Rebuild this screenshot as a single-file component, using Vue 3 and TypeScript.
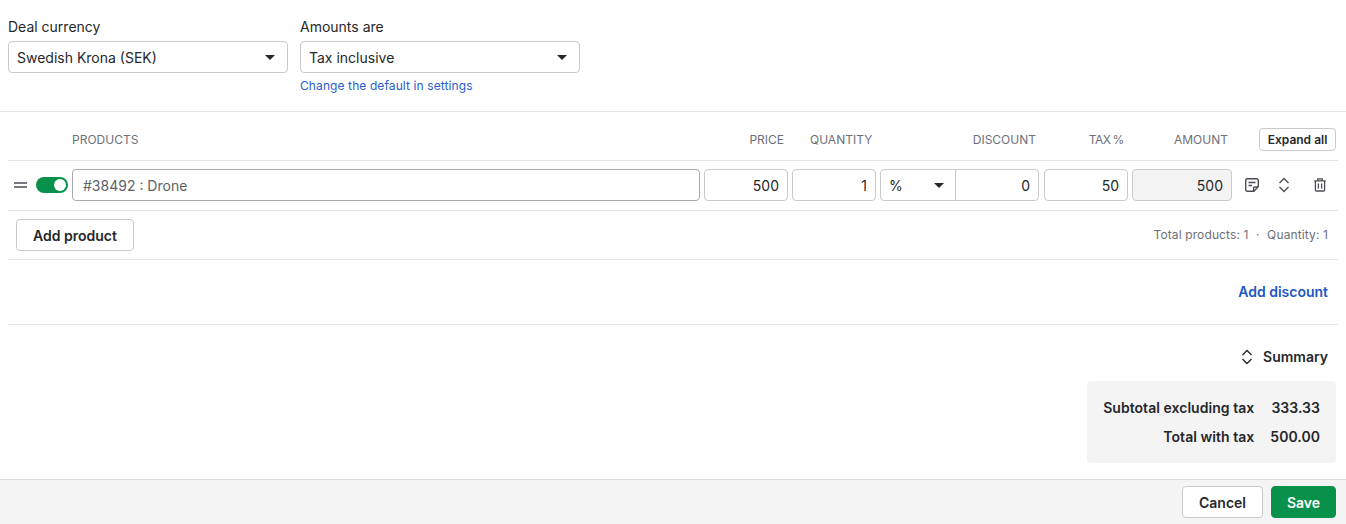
<script setup lang="ts">
const fields = [
  { label: 'Deal currency', value: 'Swedish Krona (SEK)', hint: '' },
  { label: 'Amounts are', value: 'Tax inclusive', hint: 'Change the default in settings' },
]
</script>

<template>
  <div class="page">
    <section class="top">
      <div v-for="f in fields" :key="f.label" class="field">
        <label class="label">{{ f.label }}</label>
        <div class="box select">
          <span>{{ f.value }}</span>
          <i class="caret"></i>
        </div>
        <a v-if="f.hint" class="hint">{{ f.hint }}</a>
      </div>
    </section>

    <section class="table">
      <div class="grid head">
        <span class="c-prod">PRODUCTS</span>
        <span class="r c-price">PRICE</span>
        <span class="c-qty">QUANTITY</span>
        <span class="r c-disc">DISCOUNT</span>
        <span class="r c-tax">TAX %</span>
        <span class="r c-amt">AMOUNT</span>
        <button class="expand">Expand all</button>
      </div>

      <div class="grid row">
        <div class="c-lead">
          <span class="drag"></span>
          <span class="toggle"><span class="knob"></span></span>
        </div>
        <div class="box prod c-prod">#38492 : Drone</div>
        <div class="box num c-price">500</div>
        <div class="box num c-qty">1</div>
        <div class="box disc c-disc">
          <div class="unit"><span>%</span><i class="caret"></i></div>
          <div class="dval">0</div>
        </div>
        <div class="box num c-tax">50</div>
        <div class="box num ro c-amt">500</div>
        <div class="actions">
          <svg width="16" height="16" viewBox="0 0 16 16" fill="none" stroke="#4b4d55" stroke-width="1.4">
            <path d="M1.7 3.2a1.5 1.5 0 0 1 1.5-1.5h9.6a1.5 1.5 0 0 1 1.5 1.5v6.6l-4.5 4.5H3.2a1.5 1.5 0 0 1-1.5-1.5z" />
            <path d="M4.5 5.5h7M4.5 8.5h3.5M9.6 14V10.8a.8.8 0 0 1 .8-.8H14" />
          </svg>
          <svg width="16" height="16" viewBox="0 0 16 16" fill="none" stroke="#4b4d55" stroke-width="1.3">
            <path d="M3.5 6 8 1.5 12.5 6M3.5 10 8 14.5 12.5 10" />
          </svg>
          <svg width="16" height="16" viewBox="0 0 16 16" fill="none" stroke="#4b4d55" stroke-width="1.3">
            <path d="M2.2 3.8h11.6M5.8 3.6V1.9h4.4v1.7M3.4 3.8v9A1.2 1.2 0 0 0 4.6 14h6.8a1.2 1.2 0 0 0 1.2-1.2v-9M6.4 6.4v5M9.6 6.4v5" />
          </svg>
        </div>
      </div>

      <div class="add-row">
        <button class="btn">Add product</button>
        <span class="totals">Total products: 1 <span class="dot">·</span> Quantity: 1</span>
      </div>

      <div class="discount-row">
        <a class="add-discount">Add discount</a>
      </div>
    </section>

    <section class="summary">
      <div class="summary-title">
        <svg width="16" height="16" viewBox="0 0 16 16" fill="none" stroke="#26272b" stroke-width="1.4">
          <path d="M3.5 6 8 1.5 12.5 6M3.5 10 8 14.5 12.5 10" />
        </svg>
        <span>Summary</span>
      </div>
      <div class="summary-box">
        <span>Subtotal excluding tax</span><span>333.33</span>
        <span>Total with tax</span><span>500.00</span>
      </div>
    </section>

    <footer class="footer">
      <button class="btn cancel">Cancel</button>
      <button class="btn save">Save</button>
    </footer>
  </div>
</template>

<style>
html, body { margin: 0; background: #fff; }
</style>

<style scoped>
.page {
  width: 1346px;
  height: 524px;
  display: flex;
  flex-direction: column;
  overflow: hidden;
  font-family: Inter, "Liberation Sans", sans-serif;
  color: #26272b;
  box-sizing: border-box;
}
.top {
  box-sizing: border-box;
  padding: 16px 8px 0;
  display: flex;
  gap: 12px;
  border-bottom: 1px solid #e4e4e6;
  flex: none;
  height: 112px;
}
.field { width: 280px; display: flex; flex-direction: column; }
.label {
  font: 14px/22px Inter, sans-serif;
  height: 25px;
}
.box {
  box-sizing: border-box;
  height: 32px;
  border: 1px solid #c9cacd;
  border-radius: 4px;
  background: #fff;
  font: 14px/30px Inter, sans-serif;
  padding-top: 1px;
}
.select {
  display: flex;
  align-items: center;
  justify-content: space-between;
  padding: 1px 12px 0 8px;
}
.caret {
  width: 0;
  height: 0;
  border-left: 5px solid transparent;
  border-right: 5px solid transparent;
  border-top: 5px solid #26272b;
}
.hint {
  margin-top: 5px;
  font: 12px/16px Inter, sans-serif;
  letter-spacing: 0.1px;
  color: #2a5dd0;
}
.table { padding: 0 8px; flex: none; }
.grid {
  display: grid;
  grid-template-columns: 64px 632px 88px 88px 164px 88px 100px 104px;
  border-bottom: 1px solid #e4e4e6;
  align-items: center;
}
.head {
  height: 49px;
  box-sizing: border-box;
  padding-top: 6px;
  font-size: 12px;
  color: #6e7077;
}
.r { text-align: right; }
.head .c-prod { grid-column: 2; }
.head .c-price { grid-column: 3; padding-right: 8px; }
.head .c-qty { grid-column: 4; padding-left: 18px; }
.head .c-disc { grid-column: 5; padding-right: 8px; }
.head .c-tax { grid-column: 6; padding-right: 8px; letter-spacing: -0.4px; word-spacing: -1px; }
.head .c-amt { grid-column: 7; padding-right: 4px; }
.expand {
  grid-column: 8;
  justify-self: end;
  width: 77px;
  height: 23px;
  padding: 0;
  border: 1px solid #c9cacd;
  border-radius: 4px;
  background: #fff;
  font: 600 12px Inter, sans-serif;
  color: #26272b;
}
.row {
  height: 50px;
  box-sizing: border-box;
  padding-bottom: 1px;
}
.row .c-prod, .row .c-price, .row .c-qty, .row .c-tax { margin-right: 4px; }
.row .c-disc { margin-right: 5px; }
.c-lead { display: flex; align-items: center; padding-left: 6px; gap: 9px; }
.drag {
  width: 13px;
  height: 6px;
  box-sizing: border-box;
  border-top: 2px solid #777980;
  border-bottom: 2px solid #777980;
}
.toggle {
  width: 32px;
  height: 16px;
  border-radius: 8px;
  background: #08914a;
  position: relative;
}
.knob {
  position: absolute;
  right: 2px;
  top: 2px;
  width: 12px;
  height: 12px;
  border-radius: 50%;
  background: #fff;
}
.prod { padding-left: 10px; color: #5f6168; border-color: #a8aaae; }
.num { text-align: right; padding-right: 8px; }
.disc { display: flex; padding-top: 0; }
.unit {
  width: 75px;
  box-sizing: border-box;
  display: flex;
  align-items: center;
  justify-content: space-between;
  padding: 1px 11px 0 8px;
  border-right: 1px solid #c9cacd;
}
.dval { flex: 1; text-align: right; padding: 1px 8px 0 0; }
.ro { background: #f3f3f4; }
.actions { display: flex; gap: 16px; padding-left: 12px; }
.actions svg:last-child { margin-left: 4px; }
.add-row {
  height: 49px;
  box-sizing: border-box;
  border-bottom: 1px solid #e4e4e6;
  display: flex;
  align-items: center;
  justify-content: space-between;
  padding: 0 10px 0 8px;
}
.btn {
  box-sizing: border-box;
  height: 32px;
  border: 1px solid #c9cacd;
  border-radius: 4px;
  background: #fff;
  font: 600 14px Inter, sans-serif;
  color: #26272b;
  padding: 0 16px;
}
.totals { font-size: 12px; letter-spacing: 0.12px; color: #6e7077; margin-top: -2px; }
.dot { margin: 0 4px; }
.discount-row {
  height: 65px;
  box-sizing: border-box;
  border-bottom: 1px solid #e4e4e6;
  display: flex;
  align-items: center;
  justify-content: flex-end;
  padding: 0 10px 2px 0;
}
.add-discount { font-size: 14px; font-weight: 600; color: #1d56c4; }
.summary {
  flex: 1;
  padding: 0 10px 0 0;
  display: flex;
  flex-direction: column;
  align-items: flex-end;
}
.summary-title {
  height: 56px;
  box-sizing: border-box;
  padding-top: 7px;
  display: flex;
  align-items: center;
  gap: 8px;
  font-size: 14px;
  font-weight: 600;
  padding-right: 8px;
}
.summary-box {
  width: 249px;
  height: 82px;
  box-sizing: border-box;
  padding: 12px 16px;
  background: #f4f4f5;
  border-radius: 4px;
  display: grid;
  grid-template-columns: 1fr auto;
  column-gap: 16px;
  align-items: center;
  justify-items: end;
  font-size: 14px;
  font-weight: 600;
  letter-spacing: 0.04px;
}
.footer {
  flex: none;
  height: 45px;
  box-sizing: border-box;
  border-top: 1px solid #dcdcde;
  background: #f4f4f5;
  display: flex;
  align-items: center;
  justify-content: flex-end;
  gap: 8px;
  padding: 0 10px;
}
.cancel { width: 81px; padding: 0; }
.save { width: 65px; padding: 0; background: #08914a; border-color: #08914a; color: #fff; }
</style>
